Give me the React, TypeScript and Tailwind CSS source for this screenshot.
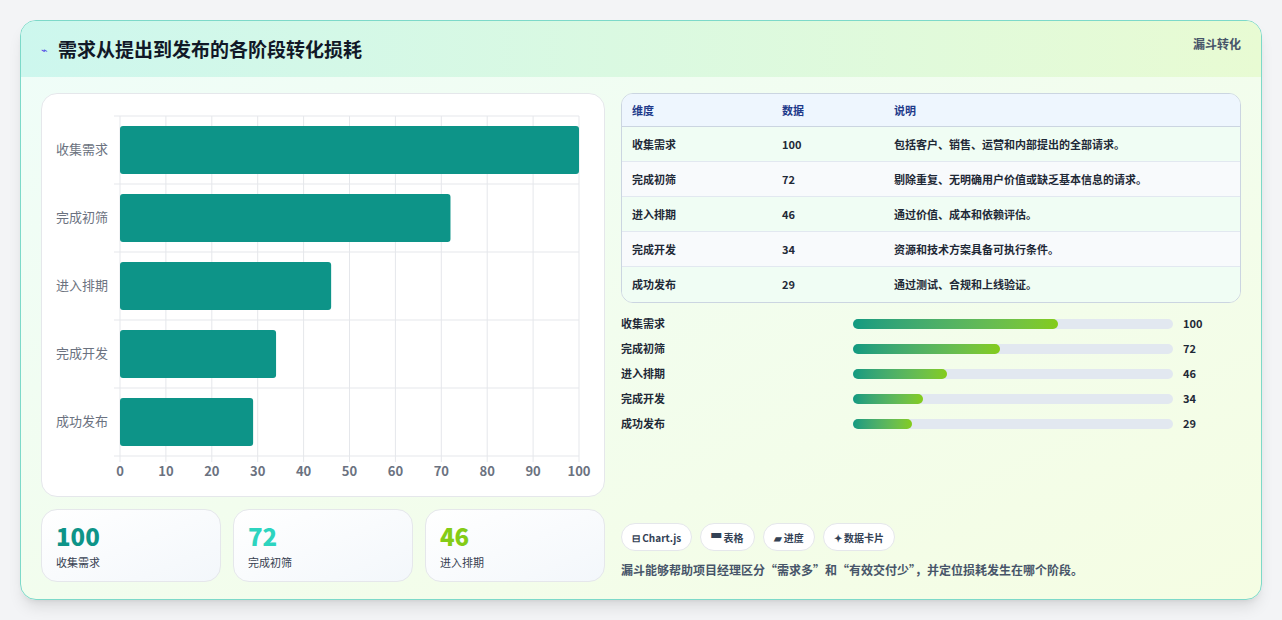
import React from 'react';

const stages = [
  { name: '收集需求', value: 100, desc: '包括客户、销售、运营和内部提出的全部请求。' },
  { name: '完成初筛', value: 72, desc: '剔除重复、无明确用户价值或缺乏基本信息的请求。' },
  { name: '进入排期', value: 46, desc: '通过价值、成本和依赖评估。' },
  { name: '完成开发', value: 34, desc: '资源和技术方案具备可执行条件。' },
  { name: '成功发布', value: 29, desc: '通过测试、合规和上线验证。' },
];

const font = { fontFamily: '"Noto Sans CJK SC", "Noto Sans", sans-serif' };

function BarChart() {
  const x0 = 78, x1 = 537, y0 = 22, y1 = 362;
  const band = (y1 - y0) / 5;
  const sx = (v: number) => x0 + ((x1 - x0) * v) / 100;
  return (
    <svg width="562" height="402" className="block">
      {Array.from({ length: 11 }).map((_, i) => (
        <line key={i} x1={sx(i * 10)} x2={sx(i * 10)} y1={y0} y2={y1 + 6} stroke="#e5e7eb" />
      ))}
      {Array.from({ length: 6 }).map((_, i) => (
        <line key={i} x1={x0 - 6} x2={x1} y1={y0 + band * i} y2={y0 + band * i} stroke="#e5e7eb" />
      ))}
      {stages.map((s, i) => (
        <g key={s.name}>
          <rect x={x0} y={y0 + band * i + 10} width={sx(s.value) - x0} height={48} rx={3} fill="#0d9488" />
          <text x={x0 - 12} y={y0 + band * i + band / 2 + 4} textAnchor="end" fontSize="13" fill="#6b7280">{s.name}</text>
        </g>
      ))}
      {Array.from({ length: 11 }).map((_, i) => (
        <text key={i} x={sx(i * 10)} y={y1 + 20} textAnchor="middle" fontSize="13" fontWeight="600" fill="#6b7280">{i * 10}</text>
      ))}
    </svg>
  );
}

export default function App() {
  return (
    <div className="w-[1282px] h-[620px] bg-[#f3f4f6] p-5" style={font}>
      <div className="h-[580px] rounded-2xl border border-[#7dd9c9] overflow-hidden bg-gradient-to-br from-[#effdf9] to-[#f5fde3] shadow-lg flex flex-col">
        <div className="h-[56px] flex items-center justify-between px-5 bg-gradient-to-r from-[#cdf7ee] to-[#e8fbd3]">
          <div className="flex items-center gap-2.5">
            <span className="text-[11px] text-[#4f46e5]">⌁</span>
            <h1 className="text-[19px] font-bold text-[#111827]">需求从提出到发布的各阶段转化损耗</h1>
          </div>
          <span className="text-[12px] font-bold text-[#475569] self-start mt-3.5">漏斗转化</span>
        </div>
        <div className="flex gap-4 px-5 pt-4">
          <div className="w-[564px] flex flex-col gap-3">
            <div className="h-[404px] bg-white rounded-2xl border border-[#e5e7eb]">
              <BarChart />
            </div>
            <div className="grid grid-cols-3 gap-3">
              {[
                ['100', '收集需求', 'text-[#0d9488]'],
                ['72', '完成初筛', 'text-[#2dd4bf]'],
                ['46', '进入排期', 'text-[#84cc16]'],
              ].map(([v, l, c]) => (
                <div key={l} className="h-[73px] rounded-2xl border border-[#e5e7eb] bg-gradient-to-br from-white to-[#f3f7fb] px-3.5 pt-2.5">
                  <div className={`text-[24px] font-extrabold leading-8 ${c}`}>{v}</div>
                  <div className="text-[11px] text-[#374151] mt-0.5">{l}</div>
                </div>
              ))}
            </div>
          </div>
          <div className="flex-1 flex flex-col">
            <div className="rounded-xl border border-[#cbd5e1] overflow-hidden bg-white/60">
              <div className="grid grid-cols-[150px_112px_1fr] h-[33px] items-center px-2.5 bg-[#eef6fe] border-b border-[#cbd5e1] text-[11px] font-bold text-[#1e3a8a]">
                <span>维度</span><span>数据</span><span>说明</span>
              </div>
              {stages.map((s, i) => (
                <div key={s.name} className={`grid grid-cols-[150px_112px_1fr] h-[35px] items-center px-2.5 text-[11px] font-semibold text-[#1f2937] ${i < 4 ? 'border-b border-[#e2e8f0]' : ''} ${i % 2 ? 'bg-[#f8fafc]' : 'bg-[#f0fdf4]'}`}>
                  <span>{s.name}</span><span>{s.value}</span><span>{s.desc}</span>
                </div>
              ))}
            </div>
            <div className="mt-3 flex flex-col gap-[8px]">
              {stages.map((s) => (
                <div key={s.name} className="flex items-center h-[17px] text-[11px] font-bold text-[#1f2937]">
                  <span className="w-[232px]">{s.name}</span>
                  <div className="w-[320px] h-[10px] rounded-full bg-[#e2e8f0]">
                    <div className="h-full rounded-full bg-gradient-to-r from-[#0f9a80] to-[#84cc16]" style={{ width: `${s.value * 0.64}%` }} />
                  </div>
                  <span className="ml-2.5">{s.value}</span>
                </div>
              ))}
            </div>
            <div className="mt-[91px] flex gap-2">
              {['⊟ Chart.js', '▀ 表格', '▰ 进度', '✦ 数据卡片'].map((t) => (
                <span key={t} className="h-[28px] px-2.5 flex items-center rounded-full bg-white border border-[#e5e7eb] text-[10px] font-bold text-[#334155]">{t}</span>
              ))}
            </div>
            <p className="mt-2.5 text-[12px] text-[#475569] font-semibold">漏斗能够帮助项目经理区分“需求多”和“有效交付少”，并定位损耗发生在哪个阶段。</p>
          </div>
        </div>
      </div>
    </div>
  );
}
